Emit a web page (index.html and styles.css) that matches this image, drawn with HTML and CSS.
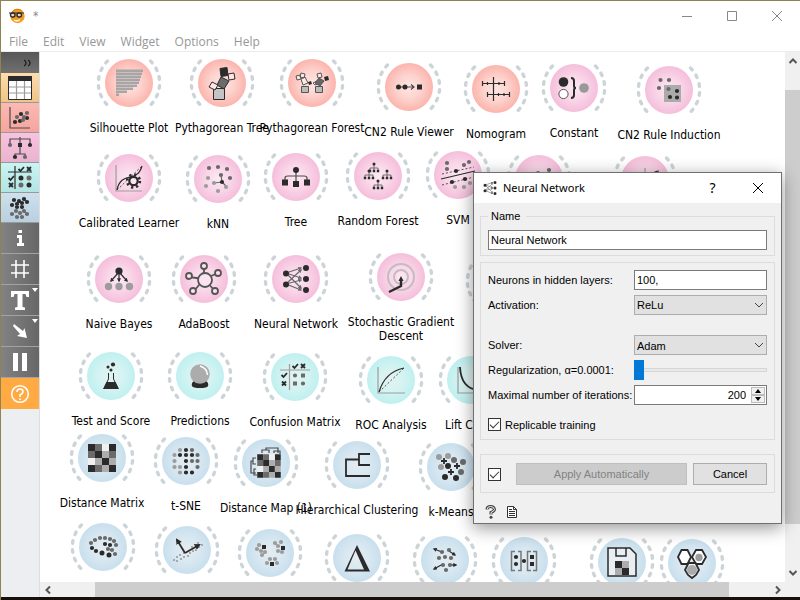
FILE: index.html
```html
<!DOCTYPE html>
<html lang="en">
<head>
<meta charset="utf-8">
<title>Workflow canvas</title>
<link rel="stylesheet" href="styles.css">
</head>
<body>
<svg class="defs" aria-hidden="true">
  <defs>
    <radialGradient id="g-red"><stop offset="0" stop-color="#fee6e3"/><stop offset=".5" stop-color="#fdd3ce"/><stop offset="1" stop-color="#fcb4ad"/></radialGradient>
    <radialGradient id="g-pink"><stop offset="0" stop-color="#fce9f3"/><stop offset=".5" stop-color="#f9d6e8"/><stop offset="1" stop-color="#f5bedb"/></radialGradient>
    <radialGradient id="g-cyan"><stop offset="0" stop-color="#e2f3f2"/><stop offset=".5" stop-color="#d5f3f2"/><stop offset="1" stop-color="#bff0f0"/></radialGradient>
    <radialGradient id="g-blue"><stop offset="0" stop-color="#e4ecf1"/><stop offset=".5" stop-color="#d9e8f1"/><stop offset="1" stop-color="#c8dfed"/></radialGradient>
    <g id="ring"><path class="ring" d="M-21.5-22A31 31 0 0 0-21.5 22M21.5-22A31 31 0 0 1 21.5 22"/></g>
    <marker id="tip" viewBox="0 0 6 6" refX="4" refY="3" markerWidth="3.4" markerHeight="3.4" orient="auto"><path d="M0 0L6 3L0 6z" fill="#2b2b2b"/></marker>
    <marker id="tipg" viewBox="0 0 6 6" refX="4" refY="3" markerWidth="3.4" markerHeight="3.4" orient="auto"><path d="M0 0L6 3L0 6z" fill="#6a6a6a"/></marker>
    <g id="i-net">
      <path class="l g6" marker-end="url(#tipg)" d="M-10-6L5-11"/><path class="l g6" marker-end="url(#tipg)" d="M-10-6L5-1"/><path class="l g6" marker-end="url(#tipg)" d="M-10-6L5 9"/>
      <path class="l g6" marker-end="url(#tipg)" d="M-10 5L5-9"/><path class="l g6" marker-end="url(#tipg)" d="M-10 5L5 1"/><path class="l g6" marker-end="url(#tipg)" d="M-10 5L5 11"/>
      <path class="d k w6" d="M-10-5.500h0M-10 5.500h0M10-11h0M10 0h0M10 11h0"/>
    </g>
    <g id="i-miniTree"><path class="l thin" d="M0-4V0M-4 3V0H4V3M0 0V3"/><path class="d k w3" d="M0-4h0"/><path class="sq" d="M-4 3h0M0 3h0M4 3h0"/></g>
    <g id="i-matrix">
      <path fill="#2b2b2b" d="M-14-14h7v7h-7zM7-14h7v7h-7zM-7-7h7v7h-7zM0 0h7v7h-7zM-14 7h7v7h-7zM7 7h7v7h-7z"/>
      <path fill="#6b6b6b" d="M-7-14h7v7h-7zM-14-7h7v7h-7zM7-7h7v7h-7zM-7 7h7v7h-7z"/>
      <path fill="#adadad" d="M0-7h7v7h-7zM-7 0h7v7h-7zM7 0h7v7h-7zM0 7h7v7h-7z"/>
      <path fill="#f0f0f0" d="M0-14h7v7h-7zM-14 0h7v7h-7z"/>
    </g>
    <g id="i-check"><path class="l k s2" d="M-2.500 0l2 2 3.500-4"/></g>
    <g id="i-cross"><path class="l k s2" d="M-2-2l4 4m0-4l-4 4"/></g>
  </defs>
</svg>

<div class="window">
  <header class="titlebar">
    <svg class="logo" viewBox="0 0 16 16" aria-hidden="true"><circle cx="8.500" cy="8" r="7.200" fill="#f39c1f"/><path d="M3 4Q8-1 13 3" fill="none" stroke="#d07a10"/><path d="M5 12q3 2 6-.5" fill="none" stroke="#fff3d8" stroke-width="1.500"/><g fill="#e8d9c5" stroke="#2b2b33" stroke-width="1.400"><rect x="1.500" y="5" width="4.500" height="4" rx="2"/><rect x="8" y="5" width="4.500" height="4" rx="2"/></g><path d="M0 5H15" stroke="#2b2b33"/></svg>
    <span class="doc">*</span>
    <div class="caption">
      <button aria-label="Minimize"><svg viewBox="0 0 12 12"><path d="M1 6.500h10"/></svg></button>
      <button aria-label="Maximize"><svg viewBox="0 0 12 12"><path d="M1.500 1.500h9v9h-9z"/></svg></button>
      <button aria-label="Close"><svg viewBox="0 0 12 12"><path d="M1 1l10 10M11 1L1 11"/></svg></button>
    </div>
  </header>
  <nav class="menubar">
    <a href="#">File</a><a href="#">Edit</a><a href="#">View</a><a href="#">Widget</a><a href="#">Options</a><a href="#">Help</a>
  </nav>
  <div class="body">
    <aside class="toolbar">
      <button class="expand" aria-label="Expand toolbox"><svg viewBox="0 0 10 8"><path d="M1 1q2 1 2 3t-2 3M5 1q2 1 2 3t-2 3" fill="none" stroke="#1d1d1d" stroke-width="1.300"/></svg></button>
      <button class="cat data" aria-label="Data"><svg viewBox="-15 -14 30 28"><path fill="#fff" d="M-11-11h23v22h-23z"/><path class="l g9" d="M-11-1h23M-11 5h23M-3.500-7v18M4.500-7v18"/><path fill="none" stroke="#2b2b2b" d="M-11.500-11.500h23v23h-23z"/><path fill="#2b2b2b" d="M-12-12h24v5h-24z"/></svg></button>
      <button class="cat visualize" aria-label="Visualize"><svg viewBox="-15 -14 30 28"><path class="l g4" d="M-10-11V10H10"/><path class="d k w4" d="M-5 4h0M0 3h0M1-4h0M7 0h0"/><path class="d g6 w4" d="M-3-1h0M4-1h0M7-5h0M3 2h0"/></svg></button>
      <button class="cat model" aria-label="Model"><svg viewBox="-15 -14 30 28"><path class="l g4" d="M0-11V6M-10-4V-9H10V-4M-5 9V6H5V9"/><path class="d g6 w4" d="M-10-3h0M5 9h0"/><path class="d k w4" d="M10-3h0M-5 9h0"/><path fill="#2b2b2b" d="M-2-5h4v4h-4z"/></svg></button>
      <button class="cat evaluate" aria-label="Evaluate"><svg viewBox="-15 -14 30 28"><path class="l k" d="M-12-6H12M-5-12V11"/><use href="#i-check" x="1" y="-9"/><use href="#i-cross" x="9" y="-9"/><use href="#i-check" x="-9" y="0"/><use href="#i-cross" x="-9" y="7"/><path class="d k w5" d="M1 0h0M9 7h0"/><path class="d g6 w5" d="M1 7h0M9 0h0"/></svg></button>
      <button class="cat unsupervised" aria-label="Unsupervised"><svg viewBox="-15 -14 30 28"><path class="d g6 w4" d="M-8 6h0M-4 3h0M0 5h0M4 3h0M7 6h0M-3 9h0M2 9h0"/><path class="d k w4" d="M-6-8h0M-1-7h0M4-9h0M-8-3h0M-3-4h0M2-5h0M7-6h0M-3-1h0M2-1h0"/></svg></button>
      <button class="tool" aria-label="Info"><svg viewBox="-15 -15 30 30"><path fill="#fff" d="M-3-3H2V5H4V8H-3V5H-1V0H-3zM-1.500-8H2V-5H-1.500z"/></svg></button>
      <button class="tool" aria-label="Grid"><svg viewBox="-15 -15 30 30"><path class="w" d="M-9-4H9M-9 4H9M-4-9V9M4-9V9"/></svg></button>
      <button class="tool menu" aria-label="Text"><svg viewBox="-15 -15 30 30"><path fill="#fff" d="M-9-9H9V-3H6.500L5.500-6H2.500V7L5 7.500V10H-5V7.500L-2.500 7V-6H-5.500L-6.500-3H-9z"/></svg></button>
      <button class="tool menu" aria-label="Arrow"><svg viewBox="-15 -15 30 30"><path fill="#fff" d="M-7-5L-6-7L3 0L4.500-3L7 7L-3 5L0 3z"/></svg></button>
      <button class="tool" aria-label="Pause"><svg viewBox="-15 -15 30 30"><path fill="#fff" d="M-7-9H-2V9H-7zM2-9H7V9H2z"/></svg></button>
      <button class="tool help" aria-label="Help"><svg viewBox="-15 -15 30 30"><circle r="8.300" class="w"/><path class="w" d="M-3-2Q-3-5 0-5T3-2.500Q3-.5 0 1V3M0 4.500v1.500"/></svg></button>
    </aside>
    <div class="view">
      <main class="canvas">
        <figure class="node red" style="--x:89;--y:31"><svg viewBox="-36 -26 72 52"><use href="#ring"/><circle class="disc" r="24"/><path fill="#a6a6a6" d="M-13-13.500h27v2.600h-27zM-13-10.500h26v2.600h-26zM-13-7.500h25v2.600h-25zM-13-4.500h24v2.600h-24zM-13-1.500h23v2.600h-23zM-13 1.500h21v2.600h-21zM-13 4.500h17v2.600h-17zM-13 7.500h11v2.600h-11zM-13 10.500h3v2.600h-3z"/></svg><figcaption>Silhouette Plot</figcaption></figure>
        <figure class="node red" style="--x:182;--y:31"><svg viewBox="-36 -26 72 52"><use href="#ring"/><circle class="disc" r="24"/><g stroke="#2b2b2b"><path fill="#c4c4c4" d="M-8.500 5.500h11v11h-11z"/><path fill="#6b6b6b" d="M-1-6l8 4-5 8-7-4z"/><path fill="#2b2b2b" d="M-2-14.500l7-1 1 8-7 1z"/><path fill="#fde8e5" d="M6-9l6-1 1 6-6 1zM-10-1l6 3-3 5-6-3z"/></g></svg><figcaption>Pythagorean Tree</figcaption></figure>
        <figure class="node red" style="--x:272;--y:31"><svg viewBox="-36 -26 72 52"><use href="#ring"/><circle class="disc" r="24"/><g stroke="#555"><path fill="#bbb" d="M-10.500 3.500h7v6h-7zM3.500 3.500h7v6h-7z"/><path fill="#fde8e5" d="M-11-4l4-2 3 6-5 2zM-16-7l4-1 1 4-4 1zM-11-10l4 1-1 4-4-1zM1 0l4-2 1 3-3 1zM5-9l4-1 1 4-4 1z"/><path fill="#666" d="M7-5l5 3-4 5-5-3z"/></g><path fill="#2b2b2b" d="M-4-1l3-1 1 3-3 1zM12-6l4-1 1 4-4 1z"/></svg><figcaption>Pythagorean Forest</figcaption></figure>
        <figure class="node red" style="--x:369;--y:35"><svg viewBox="-36 -26 72 52"><use href="#ring"/><circle class="disc" r="24"/><path class="l g4" d="M-10 0H5M2-2.500L5 0L2 2.500"/><path class="d k w5" d="M-10.500 0h0M-4 0h0"/><path fill="#2b2b2b" d="M8-2.500h5v5h-5z"/></svg><figcaption>CN2 Rule Viewer</figcaption></figure>
        <figure class="node red" style="--x:456;--y:37"><svg viewBox="-36 -26 72 52"><use href="#ring"/><circle class="disc" r="24"/><path class="l k" d="M-2.500-12V12M-13.500-5.500H8.500M-8.500 5.500H13.500M-13.500-8v5M-8.500-7v3M3-7v3M8.500-8v5M-8.500 3v5M2.500 4v3M8 4v3M13.500 3v5"/></svg><figcaption>Nomogram</figcaption></figure>
        <figure class="node pink" style="--x:534;--y:36"><svg viewBox="-36 -26 72 52"><use href="#ring"/><circle class="disc" r="24"/><circle cx="-10.500" cy="-6" r="4.800" fill="#2b2b2b"/><circle cx="-10.500" cy="6" r="4.600" fill="#fff" stroke="#555"/><circle cx="10" r="4.800" fill="#999"/><path fill="none" stroke="#2b2b2b" stroke-width="2" d="M-3-10Q0-10 0-7V-2Q0 0 2 0Q0 0 0 2V7Q0 10-3 10"/></svg><figcaption>Constant</figcaption></figure>
        <figure class="node pink" style="--x:629;--y:38"><svg viewBox="-36 -26 72 52"><use href="#ring"/><circle class="disc" r="24"/><path fill="#ababab" d="M-5-5H12V12H-5z"/><path class="d g6 w4" d="M-8.500-10h0M0-10h0M-10-2h0M-.5-1h0"/><path class="d k w4" d="M8 1h0M1 7h0M8 7.500h0"/></svg><figcaption>CN2 Rule Induction</figcaption></figure>

        <figure class="node pink" style="--x:89;--y:126"><svg viewBox="-36 -26 72 52"><use href="#ring"/><circle class="disc" r="24"/><path class="l g9" d="M-13-13V13H13"/><path class="l k" d="M-12 12C-8-8 8 6 13-12"/><path class="l k dash" d="M-12 12L13-12"/><circle cx="4.500" cy="3" r="6.400" fill="none" stroke="#2b2b2b" stroke-width="2.600" stroke-dasharray="2.200 2.827"/><circle cx="4.500" cy="3" r="4.200" fill="#fbe3ef" stroke="#2b2b2b" stroke-width="2.200"/></svg><figcaption>Calibrated Learner</figcaption></figure>
        <figure class="node pink" style="--x:178;--y:127"><svg viewBox="-36 -26 72 52"><use href="#ring"/><circle class="disc" r="24"/><path class="l g6" d="M4 3L3-4M4 3L-4 4M4 3L8 7"/><path class="d g6 w4" d="M-9-11h0M0-12h0M9-10h0M3-4h0M12-1h0"/><path class="d g9 w4" d="M-10-1h0M-4 4h0M-12 7h0M8 8h0M0 12h0"/><path class="d k w4" d="M4 3h0"/></svg><figcaption>kNN</figcaption></figure>
        <figure class="node pink" style="--x:256;--y:125"><svg viewBox="-36 -26 72 52"><use href="#ring"/><circle class="disc" r="24"/><path class="l g4" d="M0-6V5M-11 4V1Q-11-1-8-1H8Q11-1 11 1V4"/><circle cy="-7" r="3" fill="#2b2b2b"/><path fill="#2b2b2b" d="M-14 2.500h6v6h-6zM-3 4h6v6h-6zM8 2.500h6v6h-6z"/></svg><figcaption>Tree</figcaption></figure>
        <figure class="node pink" style="--x:338;--y:124"><svg viewBox="-36 -26 72 52"><use href="#ring"/><circle class="disc" r="24"/><use href="#i-miniTree" x="-4" y="-8"/><use href="#i-miniTree" x="-9" y="-1"/><use href="#i-miniTree" x="9" y="-1"/><use href="#i-miniTree" x="0" y="9"/></svg><figcaption>Random Forest</figcaption></figure>
        <figure class="node pink" style="--x:418;--y:123"><svg viewBox="-36 -26 72 52"><use href="#ring"/><circle class="disc" r="24"/><path class="l k" d="M-17 4L17-4"/><path class="l k dash" d="M-16-1L16-8M-16 10L16 2"/><path class="d g6 w4" d="M-11-12h0M-11-6h0M6-10h0M11-13h0"/><path class="d g9 w4" d="M-3 12h0M6 12h0M12 8h0"/><path class="d k w4" d="M-2-4h0M-6 7h0M7 4h0"/></svg><figcaption>SVM</figcaption></figure>
        <figure class="node pink" style="--x:499;--y:127"><svg viewBox="-36 -26 72 52"><use href="#ring"/><circle class="disc" r="24"/><path class="d g6 w4" d="M10-9h0M-1-6h0"/></svg><figcaption></figcaption></figure>
        <figure class="node pink" style="--x:605;--y:128"><svg viewBox="-36 -26 72 52"><use href="#ring"/><circle class="disc" r="24"/><path class="l g9" d="M0-12v20"/><path class="l k" d="M8-6Q10-9 14-9"/></svg><figcaption></figcaption></figure>

        <figure class="node pink" style="--x:79;--y:227"><svg viewBox="-36 -26 72 52"><use href="#ring"/><circle class="disc" r="24"/><path class="l k" marker-end="url(#tip)" d="M0-7L-8 2"/><path class="l k" marker-end="url(#tip)" d="M0-7V2"/><path class="l k" marker-end="url(#tip)" d="M0-7L8 2"/><circle cy="-8" r="3.600" fill="#2b2b2b"/><path class="d g9 w7" d="M-10.500 7.500h0M0 7.500h0M10.500 7.500h0"/></svg><figcaption>Naive Bayes</figcaption></figure>
        <figure class="node pink" style="--x:164;--y:227"><svg viewBox="-36 -26 72 52"><use href="#ring"/><circle class="disc" r="24"/><g fill="#fbe3ef" stroke="#555" stroke-width="1.800"><path d="M0 0V-12M0 0L-15-2M0 0L14-6M0 0L-10 12M0 0L11 12"/><circle cx="1" cy="1" r="7"/><circle cx="0" cy="-13" r="3"/><circle cx="-15" cy="-3" r="3"/><circle cx="14" cy="-6" r="3"/><circle cx="-11" cy="12" r="3"/><circle cx="11" cy="12" r="3"/></g></svg><figcaption>AdaBoost</figcaption></figure>
        <figure class="node pink" style="--x:256;--y:227"><svg viewBox="-36 -26 72 52"><use href="#ring"/><circle class="disc" r="24"/><use href="#i-net"/></svg><figcaption>Neural Network</figcaption></figure>
        <figure class="node pink" style="--x:361;--y:225"><svg viewBox="-36 -26 72 52"><use href="#ring"/><circle class="disc" r="24"/><g fill="none" stroke="#c5bcc1" stroke-width="2"><circle r="13"/><circle r="7"/></g><path fill="none" stroke="#2b2b2b" stroke-width="2.400" d="M-12 15L0 9V2"/><path fill="#2b2b2b" d="M-2.500 4L0-1L2.500 4z"/></svg><figcaption>Stochastic Gradient<br>Descent</figcaption></figure>
        <figure class="node pink" style="--x:458;--y:229"><svg viewBox="-36 -26 72 52"><use href="#ring"/><circle class="disc" r="24"/></svg><figcaption></figcaption></figure>

        <figure class="node cyan" style="--x:71;--y:324"><svg viewBox="-36 -26 72 52"><use href="#ring"/><circle class="disc" r="24"/><path fill="none" stroke="#2b2b2b" d="M-2.500-3V3L-7 12.500H7L2.500 3V-3"/><path fill="#2b2b2b" d="M-4.500 6H4.500L8 13H-8z"/><path class="d k w3" d="M-3-9h0M0-6h0"/><path class="d k w4" d="M2-11.500h0"/></svg><figcaption>Test and Score</figcaption></figure>
        <figure class="node cyan" style="--x:160;--y:324"><svg viewBox="-36 -26 72 52"><use href="#ring"/><circle class="disc" r="24"/><path fill="#2b2b2b" d="M-6 5H6Q9 7 8 10Q7 12 0 12T-8 10Q-9 7-6 5z"/><circle cy="-2" r="9.800" fill="#acacac"/><path fill="none" stroke="#fff" stroke-width="1.500" d="M0-10Q7-8 7.500-1"/></svg><figcaption>Predictions</figcaption></figure>
        <figure class="node cyan" style="--x:255;--y:325"><svg viewBox="-36 -26 72 52"><use href="#ring"/><circle class="disc" r="24"/><path class="l g9" d="M-15-7H15M-5.500-13V13"/><use href="#i-check" x="0" y="-11"/><use href="#i-cross" x="8" y="-11"/><use href="#i-check" x="-11" y="-2"/><use href="#i-cross" x="-11" y="6.500"/><path class="d g6 w4" d="M0-1.500h0M8 6.500h0"/><path fill="#6b6b6b" d="M6-3.500h4v4h-4zM-2 4.500h4v4h-4z"/></svg><figcaption>Confusion Matrix</figcaption></figure>
        <figure class="node cyan" style="--x:351;--y:328"><svg viewBox="-36 -26 72 52"><use href="#ring"/><circle class="disc" r="24"/><path class="l g9" d="M-13-13V13H14"/><path class="l k" d="M-12 12Q-6-8 13-12"/><path class="l k dash" d="M-12 12L13-12"/></svg><figcaption>ROC Analysis</figcaption></figure>
        <figure class="node cyan" style="--x:431;--y:328"><svg viewBox="-36 -26 72 52"><use href="#ring"/><circle class="disc" r="24"/><path class="l g9" d="M-13-13V13H14"/><path class="l k s2" d="M-11-13Q-10 9 8 10"/></svg><figcaption>Lift Curve</figcaption></figure>

        <figure class="node blue" style="--x:62;--y:406"><svg viewBox="-36 -26 72 52"><use href="#ring"/><circle class="disc" r="24"/><use href="#i-matrix"/></svg><figcaption>Distance Matrix</figcaption></figure>
        <figure class="node blue" style="--x:146;--y:409"><svg viewBox="-36 -26 72 52"><use href="#ring"/><circle class="disc" r="24"/><path class="d g9 w4" d="M-6-11h0M-11.500-6h0M-11.500 0h0M-6 6h0M-11.500 6h0M-6 11.500h0"/><path class="d k w4" d="M0-11h0M-6-6h0M0-6h0M6-6h0M0 0h0M0 6h0M0 11.500h0M6 11.500h0"/><path class="d g6 w4" d="M6-11h0M11.500-6h0M6 0h0M11.500 0h0M11.500 6h0"/></svg><figcaption>t-SNE</figcaption></figure>
        <figure class="node blue" style="--x:226;--y:411"><svg viewBox="-36 -26 72 52"><use href="#ring"/><circle class="disc" r="24"/><g transform="translate(3 3) scale(.84)"><use href="#i-matrix"/></g><path class="l g4" d="M-4-10v-3h7v3M0-13v-2h12v5M8-10v-2h6v3M-10-5h-3v6h3M-13-2h-2v12h5M-10 6h-2v6h3"/></svg><figcaption>Distance Map (1)</figcaption></figure>
        <figure class="node blue" style="--x:317;--y:413"><svg viewBox="-36 -26 72 52"><use href="#ring"/><circle class="disc" r="24"/><path class="l k s2" d="M13-11H2V0H13M2-5.500H-11V11H13"/></svg><figcaption>Hierarchical Clustering</figcaption></figure>
        <figure class="node blue" style="--x:411;--y:415"><svg viewBox="-36 -26 72 52"><use href="#ring"/><circle class="disc" r="24"/><path class="d g9 w6" d="M-12-10h0M-3-11h0M-10 0h0"/><path class="d g6 w6" d="M3-7h0M12-5h0M10 5h0"/><path class="d k w6" d="M-3-1h0M-6 10h0M5 11h0"/><path class="l k s2" d="M-7-9v6M-10-6h6M6-4v6M3-1h6M0 2v6M-3 5h6"/></svg><figcaption>k-Means</figcaption></figure>

        <figure class="node blue" style="--x:63;--y:495"><svg viewBox="-36 -26 72 52"><use href="#ring"/><circle class="disc" r="24"/><path class="d g6 w4" d="M-12-4h0M-8-7h0M-3-9h0M2-9h0M7-8h0M11-6h0M13-2h0M5 2h0M9 3h0M12 7h0"/><path class="d k w4" d="M-11 1h0M-7 4h0M2-3h0M7-2h0"/><path class="d k w5" d="M-1 6h0M6 8h0"/></svg></figure>
        <figure class="node blue" style="--x:147;--y:498"><svg viewBox="-36 -26 72 52"><use href="#ring"/><circle class="disc" r="24"/><path class="d g9 w2" d="M-13 10h0M-10 7h0M-10 11h0M-7 5h0M-6 9h0M-3 7h0M-3 3h0M1 6h0M3 3h0M6 1h0M5-3h0M9 0h0M8-5h0M12-3h0M15-5h0M11-7h0"/><path class="l k s2" marker-end="url(#tip)" d="M-2 3L-10-10"/><path class="l k s2" marker-end="url(#tip)" d="M-2 3L12-5"/></svg></figure>
        <figure class="node blue" style="--x:230;--y:501"><svg viewBox="-36 -26 72 52"><use href="#ring"/><circle class="disc" r="24"/><path class="d g9 w4" d="M-11-8h0M-13-4h0M-9-2h0M-5-1h0M-8 2h0M5-10h0M11-11h0M8-7h0M8-2h0M12-1h0M0 6h0M5 6h0M-3 10h0M7 10h0"/><path fill="#2b2b2b" d="M-8-8h4v4h-4zM11-7h4v4h-4zM0 9h4v4h-4z"/></svg></figure>
        <figure class="node blue" style="--x:317;--y:506"><svg viewBox="-36 -26 72 52"><use href="#ring"/><circle class="disc" r="24"/><path fill="#2b2b2b" fill-rule="evenodd" d="M0-13L13 13.500H-12.500zM-1.500-7.500L-9.500 11.500H7z"/></svg></figure>
        <figure class="node blue" style="--x:405;--y:508"><svg viewBox="-36 -26 72 52"><use href="#ring"/><circle class="disc" r="24"/><path class="l k" marker-end="url(#tip)" d="M-3-8L-11-11"/><path class="l k" marker-end="url(#tip)" d="M4-9L10-5"/><path class="l k" marker-end="url(#tip)" d="M-2 4L-11 9"/><path class="l k" marker-end="url(#tip)" d="M5 5H11"/><path class="d g6 w4" d="M-3-8h0M4-10h0M-6-2h0M0-3h0M6-2h0M-2 5h0M5 5h0M1 10h0"/></svg></figure>
        <figure class="node blue" style="--x:484;--y:509"><svg viewBox="-36 -26 72 52"><use href="#ring"/><circle class="disc" r="24"/><path fill="none" stroke="#777" stroke-width="1.500" d="M-9-9.500h-3.500v19h3.500M-6-9.500h3v19h-3M7-9.500h-3.500v19h3.500M9-9.500h3.500v19h-3.500"/><path class="d k w4" d="M-8-4h0M-8 3h0M0 0h0"/><path fill="#2b2b2b" d="M6-6h4v4h-4zM6 1h4v4h-4z"/></svg></figure>
        <figure class="node blue" style="--x:582;--y:510"><svg viewBox="-36 -26 72 52"><use href="#ring"/><circle class="disc" r="24"/><path fill="#e8eef2" stroke="#2b2b2b" stroke-width="1.500" d="M-14-14H8L14-8V14H-14z"/><path fill="none" stroke="#2b2b2b" stroke-width="1.500" d="M-6-14v8H4v-8"/><path fill="#adadad" d="M0-1h7v7h-7zM-7 6h7v7h-7z"/><path fill="#2b2b2b" d="M-7-1h7v7h-7zM0 6h7v7h-7z"/></svg></figure>
        <figure class="node blue" style="--x:652;--y:511"><svg viewBox="-36 -26 72 52"><use href="#ring"/><circle class="disc" r="24"/><g fill="#fff" stroke="#2b2b2b" stroke-width="1.800"><path d="M-10.500-13h6l3.500 7-3.500 7h-6l-3.500-7z"/><path d="M4-13h6l4 7-4 7H4L0-6z"/><path fill="#eef2f5" d="M-7 7L-3.500 0h7L7 7L4 12L0 15L-4 12z"/></g><path class="d g9 w7" d="M7-5.500h0"/><circle cy="7" r="5" fill="#aaa"/></svg></figure>
      </main>
      <div class="vscroll">
        <button aria-label="Scroll up"><svg viewBox="0 0 10 8"><path d="M1.500 6L5 2.500L8.500 6"/></svg></button>
        <div class="thumb"></div>
        <button aria-label="Scroll down"><svg viewBox="0 0 10 8"><path d="M1.500 2L5 5.500L8.500 2"/></svg></button>
      </div>
      <div class="hscroll">
        <button aria-label="Scroll left"><svg viewBox="0 0 8 10"><path d="M6 1.500L2.500 5L6 8.500"/></svg></button>
        <div class="thumb"></div>
        <button aria-label="Scroll right"><svg viewBox="0 0 8 10"><path d="M2 1.500L5.500 5L2 8.500"/></svg></button>
      </div>
    </div>
  </div>

  <section class="dialog" role="dialog" aria-labelledby="dlg-title">
    <header class="dlg-title">
      <svg class="mini" viewBox="-14 -14 28 28" aria-hidden="true"><use href="#i-net"/></svg>
      <h1 id="dlg-title">Neural Network</h1>
      <button class="ask" aria-label="What's this">?</button>
      <button aria-label="Close dialog"><svg viewBox="0 0 12 12"><path d="M1 1l10 10M11 1L1 11"/></svg></button>
    </header>
    <form class="dlg-body">
      <fieldset class="name">
        <legend>Name</legend>
        <input type="text" value="Neural Network" aria-label="Name">
      </fieldset>
      <div class="box params">
        <label for="layers">Neurons in hidden layers:</label>
        <input id="layers" type="text" value="100,">
        <label for="act">Activation:</label>
        <div class="pick"><select id="act"><option>ReLu</option></select><svg viewBox="0 0 10 6"><path d="M1 1l4 4 4-4"/></svg></div>
        <label class="group-start" for="solver">Solver:</label>
        <div class="pick group-start"><select id="solver"><option>Adam</option></select><svg viewBox="0 0 10 6"><path d="M1 1l4 4 4-4"/></svg></div>
        <label for="reg">Regularization, α=0.0001:</label>
        <input id="reg" type="range" min="0" max="100" value="0">
        <label for="iter">Maximal number of iterations:</label>
        <div class="spin"><input id="iter" type="number" value="200"><span class="steps"><button type="button" aria-label="Increase"><svg viewBox="0 0 6 4"><path d="M0 4L3 0L6 4z"/></svg></button><button type="button" aria-label="Decrease"><svg viewBox="0 0 6 4"><path d="M0 0L3 4L6 0z"/></svg></button></span></div>
        <label class="tick"><input type="checkbox" checked>Replicable training</label>
      </div>
      <div class="box actions">
        <input type="checkbox" checked aria-label="Apply automatically">
        <button type="button" class="apply" disabled>Apply Automatically</button>
        <button type="button" class="cancel">Cancel</button>
      </div>
      <footer class="foot">
        <button type="button" aria-label="Help"><svg viewBox="0 0 12 14"><path d="M2 4.500Q2 1.500 5.500 1.500T9.500 4.500Q9.500 6 6 7.500V9.500" fill="none" stroke="#444" stroke-width="3"/><path d="M2 4.500Q2 1.500 5.500 1.500T9.500 4.500Q9.500 6 6 7.500V9.500" fill="none" stroke="#efefef"/><circle cx="6" cy="12.200" r="1.500" fill="#444"/></svg></button>
        <button type="button" aria-label="Report"><svg viewBox="0 0 12 14"><path d="M1.500 1.500h6l3 3v8h-9z" fill="#fff" stroke="#333"/><path d="M7.500 1.500v3h3M3 6.500h6M3 8.500h6M3 10.500h6M3 4.500h3" fill="none" stroke="#333"/></svg></button>
      </footer>
    </form>
  </section>
</div>
</body>
</html>
```

FILE: styles.css
```css
* { box-sizing: border-box; }

body {
  margin: 0;
  background: #15100c;
  color: #000;
  font: 12px/14px "DejaVu Sans Condensed", "Noto Sans", sans-serif;
}

button {
  display: flex;
  align-items: center;
  justify-content: center;
  margin: 0;
  padding: 0;
  border: 0;
  background: none;
  color: inherit;
  font: inherit;
}

.defs { position: absolute; width: 0; height: 0; }

.window {
  position: relative;
  display: flex;
  flex-direction: column;
  height: 100vh;
  overflow: hidden;
  border: 1px solid #8f8350;
  border-width: 1px 0 0 1px;
}

/* Title bar and menus */
.titlebar {
  display: flex;
  align-items: center;
  height: 30px;
  padding: 0 1px 0 8px;
  background: #fff;
  color: #888;
}
.logo { width: 16px; height: 16px; }
.doc { margin-left: 8px; }
.caption { display: flex; margin-left: auto; }
.caption button { width: 45px; height: 28px; }
.caption svg { width: 12px; height: 12px; fill: none; stroke: #888; }

.menubar {
  display: flex;
  gap: 15px;
  align-items: center;
  height: 21px;
  padding: 2px 0 0 8px;
  border-bottom: 1px solid #ececec;
  background: #fff;
  font-family: "Open Sans", sans-serif;
}
.menubar a { color: #979797; text-decoration: none; }

.body { display: flex; flex: 1; min-height: 0; margin-bottom: 3px; }

/* Left tool strip */
.toolbar {
  width: 39px;
  flex: none;
  border-right: 1px solid #dcdfe1;
  background: #eceef1;
}
.toolbar button { position: relative; width: 100%; }
.toolbar .expand {
  height: 21px;
  justify-content: flex-end;
  padding-right: 6px;
  background: linear-gradient(#575757, #707070);
}
.expand svg { width: 10px; height: 8px; }
.cat { height: 30px; border-bottom: 1px solid #999; }
.cat svg { width: 30px; height: 28px; }
.data { background: linear-gradient(#fddcae, #efc487); }
.visualize { background: linear-gradient(#fcb9b3, #f3a59e); }
.model { background: linear-gradient(#f8c3de, #eab2d0); }
.evaluate { background: linear-gradient(#c9f4f3, #b3e4e4); }
.unsupervised { background: linear-gradient(#cde0ed, #b9d0e0); }
.tool {
  height: 31px;
  border-bottom: 1px solid #a3a3a3;
  background: linear-gradient(90deg, #828282, #676767);
}
.tool svg { width: 30px; height: 30px; }
.toolbar .help { border: 0; background: #ffaa43; }
.menu::after {
  content: "";
  position: absolute;
  top: 3px;
  right: 1px;
  border: 3px solid transparent;
  border-top: 4px solid #fff;
  border-bottom: 0;
}
.w { fill: none; stroke: #fff; stroke-width: 1.6; }

/* Canvas with scrollbars */
.view {
  display: grid;
  flex: 1;
  grid-template: minmax(0, 1fr) 15px / minmax(0, 1fr) 15px;
  background: #f0f0f0;
}
.canvas { position: relative; overflow: hidden; background: #fff; }

.vscroll, .hscroll { display: flex; }
.vscroll { flex-direction: column; }
.vscroll button { height: 18px; }
.vscroll .thumb { flex: 1; margin: 20px 0 40px; background: #cdcdcd; }
.hscroll { grid-column: 1; }
.hscroll button { width: 15px; }
.hscroll .thumb { flex: 1; margin: 0 41px 0 40px; background: #cdcdcd; }
.vscroll svg { width: 10px; height: 8px; }
.hscroll svg { width: 8px; height: 10px; }
.vscroll path, .hscroll path { fill: none; stroke: #555; stroke-width: 2; }

.node {
  position: absolute;
  left: calc(var(--x) * 1px - 80px);
  top: calc(var(--y) * 1px - 26px);
  display: flex;
  flex-direction: column;
  align-items: center;
  gap: 12px;
  width: 160px;
  margin: 0;
  text-align: center;
  white-space: nowrap;
}
.node > svg { width: 72px; height: 52px; }
.red .disc { fill: url(#g-red); }
.pink .disc { fill: url(#g-pink); }
.cyan .disc { fill: url(#g-cyan); }
.blue .disc { fill: url(#g-blue); }
.ring {
  fill: none;
  stroke: #cdd4d8;
  stroke-width: 3.4;
  stroke-linecap: round;
  stroke-dasharray: 2.6 6.4;
}

/* Icon strokes */
.l { fill: none; stroke-width: 1.2; }
.l.thin { stroke: #555; stroke-width: .8; }
.l.s2 { stroke-width: 1.8; }
.dash { stroke-dasharray: 2 2; stroke-width: .8; }
.d { fill: none; stroke-linecap: round; }
.k { stroke: #2b2b2b; }
.g4 { stroke: #4a4a4a; }
.g6 { stroke: #6a6a6a; }
.g9 { stroke: #9c9c9c; }
.w2 { stroke-width: 2.2; }
.w3 { stroke-width: 3; }
.w4 { stroke-width: 4.2; }
.w5 { stroke-width: 5; }
.w6 { stroke-width: 6; }
.w7 { stroke-width: 7.4; }
.sq { fill: none; stroke: #2b2b2b; stroke-width: 2.4; stroke-linecap: square; }

/* Dialog */
.dialog {
  position: absolute;
  left: 472px;
  top: 171px;
  width: 309px;
  border: 1px solid #6f6f6f;
  background: #f0f0f0;
  box-shadow: 0 4px 16px rgba(0, 0, 0, .42);
  font: 11px/14px "Noto Sans", sans-serif;
}
.dlg-title {
  display: flex;
  align-items: center;
  height: 30px;
  padding: 0 1px 0 9px;
  background: #fff;
}
.dlg-title h1 {
  flex: 1;
  margin: 0 0 0 6px;
  font: inherit;
}
.mini { width: 14px; height: 14px; }
.dlg-title button { width: 45px; height: 30px; }
.dlg-title .ask { font-size: 14px; }
.dlg-title button svg { width: 12px; height: 12px; fill: none; stroke: #000; }

.dlg-body { padding: 6px 6px 0; font-family: "Liberation Sans", sans-serif; }
.name, .box { border: 1px solid #dcdcdc; }
.name { margin: 0; padding: 7px 7px 5px; }
.name legend { padding: 0 6px 0 3px; }

input, select { margin: 0; color: #000; font: inherit; }
input[type="text"], input[type="number"] {
  display: block;
  width: 100%;
  height: 20px;
  padding: 0 2px;
  border: 1px solid #7a7a7a;
  border-radius: 0;
  background: #fff;
}
.params {
  display: grid;
  grid-template-columns: 142px minmax(0, 1fr);
  grid-template-rows: 20px 20px 35px 20px 20px 29px;
  row-gap: 5px;
  column-gap: 4px;
  align-items: center;
  margin-top: 6px;
  padding: 7px 7px 0;
}
.params label { white-space: nowrap; }
.params .group-start { align-self: end; line-height: 20px; }
.pick { position: relative; }
.pick select {
  display: block;
  width: 100%;
  height: 20px;
  padding: 0 2px;
  appearance: none;
  border: 1px solid #adadad;
  border-radius: 0;
  background: #e1e1e1;
}
.pick svg {
  position: absolute;
  top: 7px;
  right: 3px;
  width: 10px;
  height: 6px;
  fill: none;
  stroke: #444;
  pointer-events: none;
}
input[type="range"] {
  width: 100%;
  height: 20px;
  appearance: none;
  background: none;
}
input[type="range"]::-webkit-slider-runnable-track {
  height: 4px;
  border: 1px solid #d6d6d6;
  border-left: 0;
  background: #e7eaea;
}
input[type="range"]::-webkit-slider-thumb {
  appearance: none;
  width: 10px;
  height: 20px;
  margin-top: -9px;
  background: #0078d7;
}
.spin { position: relative; }
.spin input { padding-right: 20px; text-align: right; appearance: textfield; }
.spin input::-webkit-inner-spin-button { display: none; }
.steps {
  position: absolute;
  top: 2px;
  right: 2px;
  bottom: 2px;
  display: grid;
  width: 14px;
}
.steps button { border: 1px solid #bcbcbc; background: #f0f0f0; }
.steps svg { width: 6px; height: 4px; }

.tick { display: flex; gap: 4px; align-items: center; grid-column: 1 / -1; }
input[type="checkbox"] {
  width: 13px;
  height: 13px;
  flex: none;
  appearance: none;
  display: grid;
  place-items: center;
  border: 1px solid #333;
  background: #fff;
}
input[type="checkbox"]:checked::before {
  content: "";
  width: 8px;
  height: 4px;
  margin-top: -2px;
  border: solid #333;
  border-width: 0 0 1px 1px;
  transform: rotate(-45deg);
}
.actions {
  display: flex;
  align-items: center;
  margin-top: 14px;
  padding: 8px 7px 7px;
}
.apply {
  flex: 1;
  height: 22px;
  margin: 0 6px 0 15px;
  border: 1px solid #bfbfbf;
  background: #ccc;
  color: #838383;
}
.cancel { width: 74px; height: 22px; border: 1px solid #adadad; background: #e1e1e1; }
.foot { display: flex; gap: 9px; padding: 12px 5px 4px; }
.foot svg { width: 12px; height: 14px; }
```
